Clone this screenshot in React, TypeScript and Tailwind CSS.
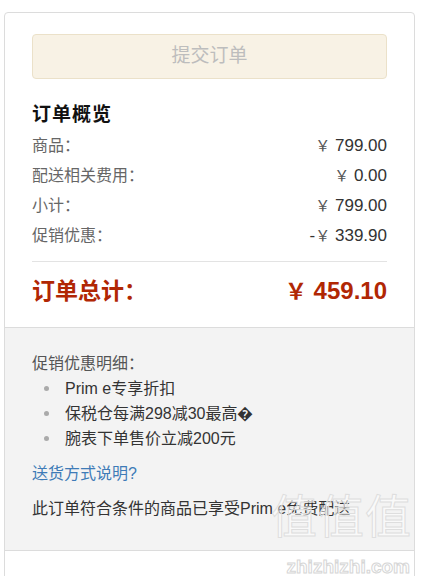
import React from 'react';

export default function App() {
  const rows = [
    { label: '商品：', value: '799.00', sign: '' },
    { label: '配送相关费用：', value: '0.00', sign: '' },
    { label: '小计：', value: '799.00', sign: '' },
    { label: '促销优惠：', value: '339.90', sign: '-' },
  ];

  const promos = ['Prim e专享折扣', '保税仓每满298减30最高�', '腕表下单售价立减200元'];

  return (
    <div
      className="relative w-[422px] h-[576px] overflow-hidden bg-white pt-[12px] pl-[4px]"
      style={{ fontFamily: '"Liberation Sans", "Noto Sans CJK SC", sans-serif' }}
    >
      <div className="w-[411px] rounded-[4px] border border-[#dcdcdc]">
        {/* Summary */}
        <div className="px-[27px] pt-[21px] pb-[14px]">
          <button className="w-full h-[45px] rounded-[4px] border border-[#ebe1c9] bg-[#f8f2e5] text-[19px] text-[#bdbdbd]">
            提交订单
          </button>

          <h3 className="mt-[22px] leading-[28px] text-[19px] tracking-[1px] font-bold text-[#111]">订单概览</h3>

          <div className="mt-[2px]">
            {rows.map((r) => (
              <div key={r.label} className="flex h-[30px] items-center justify-between">
                <span className="text-[16px] text-[#666]">{r.label}</span>
                <span className="text-[17px] text-[#333]">
                  {r.sign}
                  <span className="text-[15px] text-[#555]">￥</span> {r.value}
                </span>
              </div>
            ))}
          </div>

          <div className="mt-[10px] border-t border-[#e3e3e3]"></div>

          <div className="mt-[7px] flex h-[44px] items-center justify-between text-[#b12704]">
            <span className="text-[23px] font-bold">订单总计：</span>
            <span className="text-[24px] font-bold">
              <span className="text-[22px]">￥</span> 459.10
            </span>
          </div>
        </div>

        {/* Promotion details */}
        <div className="border-t border-b border-[#dcdcdc] bg-[#f3f3f3] px-[27px] pt-[23px] pb-[29px] text-[16px] leading-[25px]">
          <p className="text-[#555]">促销优惠明细：</p>
          <ul>
            {promos.map((p) => (
              <li key={p} className="flex items-center text-[#333]">
                <span className="ml-[12px] mr-[16px] h-[5px] w-[5px] rounded-full bg-[#aaa]"></span>
                {p}
              </li>
            ))}
          </ul>
          <a href="#" className="mt-[10px] block text-[#3e7bb7]">送货方式说明?</a>
          <p className="mt-[10px] text-[#333]">此订单符合条件的商品已享受Prim e免费配送</p>
        </div>

        <div className="h-[40px]"></div>
      </div>

      {/* watermark */}
      <div
        className="pointer-events-none absolute right-[10px] top-[494px] text-[46px] leading-none tracking-[1px] text-white/50"
        style={{ WebkitTextStroke: '1px #dedede' }}
      >
        值值值
      </div>
      <div
        className="pointer-events-none absolute right-[12px] top-[557px] text-[19px] font-bold leading-none text-white"
        style={{ WebkitTextStroke: '1px #d6d6d6' }}
      >
        zhizhizhi.com
      </div>
    </div>
  );
}
